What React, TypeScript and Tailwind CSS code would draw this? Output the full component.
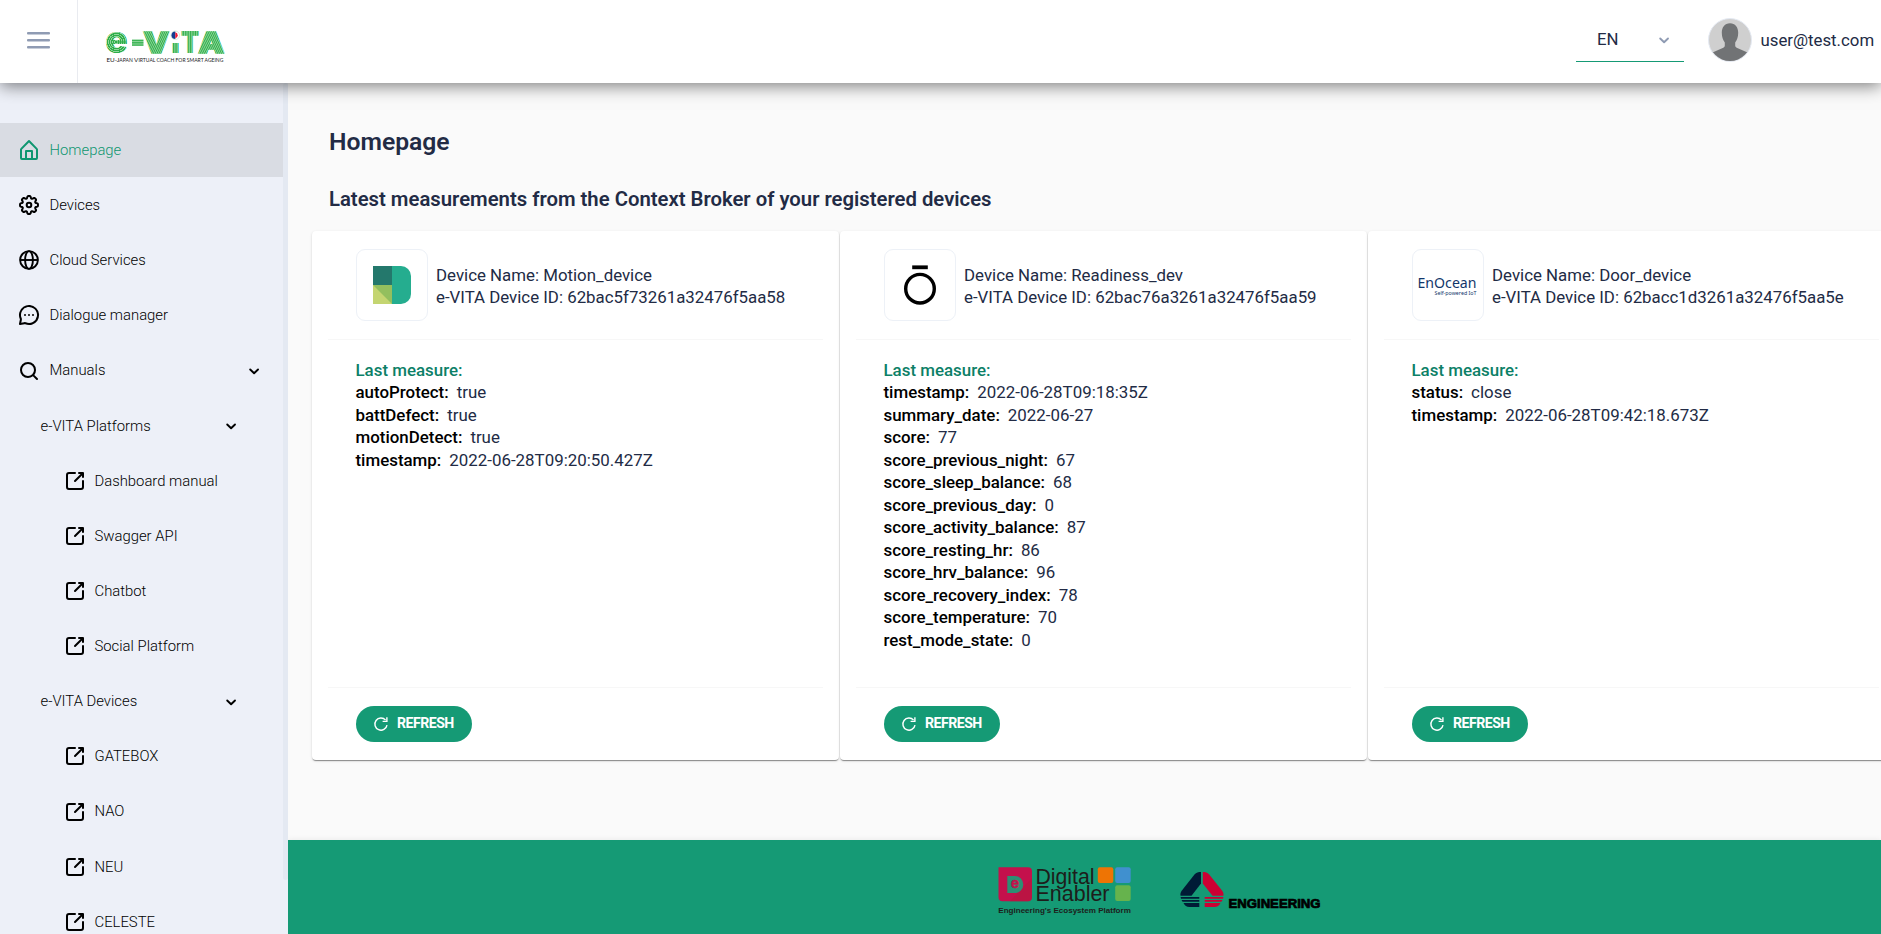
import React from "react";

type IconProps = { className?: string };

const Svg = ({ children, className = "" }: { children: React.ReactNode; className?: string }) => (
  <svg viewBox="0 0 24 24" className={`size-6 shrink-0 ${className}`} fill="currentColor">
    {children}
  </svg>
);

const HomeIcon = () => (
  <Svg>
    <path d="M20.42 10.18L12.71 2.3a1 1 0 0 0-1.42 0l-7.71 7.89A2 2 0 0 0 3 11.62V20a2 2 0 0 0 1.89 2h14.22A2 2 0 0 0 21 20v-8.38a2.07 2.07 0 0 0-.58-1.44zM10 20v-6h4v6zm9 0h-3v-7a1 1 0 0 0-1-1H9a1 1 0 0 0-1 1v7H5v-8.42l7-7.15 7 7.19z" />
  </Svg>
);

const gearPoints = Array.from({ length: 96 }, (_, i) => {
  const a = (i / 96) * Math.PI * 2;
  const r = 7.8 + 1.2 * Math.tanh(1.8 * (Math.cos(8 * a) + 0.3));
  return `${(12 + r * Math.sin(a)).toFixed(2)},${(12 - r * Math.cos(a)).toFixed(2)}`;
}).join(" ");

const GearIcon = () => (
  <Svg>
    <polygon points={gearPoints} fill="none" stroke="currentColor" strokeWidth="2" strokeLinejoin="round" />
    <circle cx="12" cy="12" r="2.3" fill="none" stroke="currentColor" strokeWidth="2" />
  </Svg>
);

const GlobeIcon = () => (
  <Svg>
    <g fill="none" stroke="currentColor" strokeWidth="1.9">
      <circle cx="12" cy="12" r="8.9" />
      <ellipse cx="12" cy="12" rx="3.9" ry="8.9" />
      <path d="M3 12h18" />
    </g>
  </Svg>
);

const ChatIcon = () => (
  <Svg>
    <circle cx="12" cy="12" r="1" />
    <circle cx="16" cy="12" r="1" />
    <circle cx="8" cy="12" r="1" />
    <path d="M19.07 4.93a10 10 0 0 0-16.28 11 1.06 1.06 0 0 1 .09.64L2 20.8a1 1 0 0 0 .27.91A1 1 0 0 0 3 22h.2l4.28-.86a1.26 1.26 0 0 1 .64.09 10 10 0 0 0 11-16.28zm.83 8.36a8 8 0 0 1-11 6.08 3.26 3.26 0 0 0-1.25-.26 3.43 3.43 0 0 0-.56.05l-2.82.57.57-2.82a3.09 3.09 0 0 0-.21-1.81 8 8 0 0 1 6.08-11 8 8 0 0 1 9.19 9.19z" />
  </Svg>
);

const SearchIcon = () => (
  <Svg>
    <path d="M20.71 19.29l-3.4-3.39A7.92 7.92 0 0 0 19 11a8 8 0 1 0-8 8 7.92 7.92 0 0 0 4.9-1.69l3.39 3.4a1 1 0 0 0 1.42 0 1 1 0 0 0 0-1.42zM5 11a6 6 0 1 1 6 6 6 6 0 0 1-6-6z" />
  </Svg>
);

const LinkIcon = () => (
  <Svg>
    <path d="M20 11a1 1 0 0 0-1 1v6a1 1 0 0 1-1 1H6a1 1 0 0 1-1-1V6a1 1 0 0 1 1-1h6a1 1 0 0 0 0-2H6a3 3 0 0 0-3 3v12a3 3 0 0 0 3 3h12a3 3 0 0 0 3-3v-6a1 1 0 0 0-1-1z" />
    <path d="M16 5h1.58l-6.29 6.28a1 1 0 0 0 0 1.42 1 1 0 0 0 1.42 0L19 6.42V8a1 1 0 0 0 1 1 1 1 0 0 0 1-1V4a1 1 0 0 0-1-1h-4a1 1 0 0 0 0 2z" />
  </Svg>
);

const Chevron = ({ className = "" }: IconProps) => (
  <svg
    viewBox="0 0 18 18"
    className={`size-[18px] shrink-0 ${className}`}
    fill="none"
    stroke="currentColor"
    strokeWidth="1.9"
    strokeLinecap="round"
    strokeLinejoin="round"
  >
    <path d="M5.200 7.500L9.100 11.300 13 7.500" />
  </svg>
);

const RefreshIcon = () => (
  <svg viewBox="0 0 16 16" className="size-4" fill="none" stroke="currentColor" strokeWidth="1.4">
    <path d="M14 9.1A6.1 6.1 0 1 1 12.6 4.1" />
    <path d="M13.9 1.2v4.2H9.6" />
  </svg>
);

const EVitaLogo = () => (
  <svg viewBox="0 0 120 34" className="h-[34px] w-[120px] overflow-visible" role="img" aria-label="e-VITA">
    <defs>
      <radialGradient id="rings" gradientUnits="userSpaceOnUse" cx="11.3" cy="12" r="2" spreadMethod="repeat">
        <stop offset="0" stopColor="#2fae4a" />
        <stop offset="0.55" stopColor="#2fae4a" />
        <stop offset="0.7" stopColor="#8fd69c" />
        <stop offset="1" stopColor="#8fd69c" />
      </radialGradient>
      <pattern id="stripe-v" width="1.7" height="4" patternUnits="userSpaceOnUse">
        <rect width="1.7" height="4" fill="#9ddba8" />
        <rect width="1" height="4" fill="#2fae4a" />
      </pattern>
      <pattern id="stripe-h" width="4" height="1.7" patternUnits="userSpaceOnUse">
        <rect width="4" height="1.7" fill="#9ddba8" />
        <rect width="4" height="1" fill="#2fae4a" />
      </pattern>
      <pattern id="stripe-l" width="1.9" height="4" patternUnits="userSpaceOnUse" patternTransform="rotate(-27)">
        <rect width="1.9" height="4" fill="#9ddba8" />
        <rect width="1.1" height="4" fill="#2fae4a" />
      </pattern>
      <pattern id="stripe-r" width="1.9" height="4" patternUnits="userSpaceOnUse" patternTransform="rotate(27)">
        <rect width="1.9" height="4" fill="#9ddba8" />
        <rect width="1.1" height="4" fill="#2fae4a" />
      </pattern>
    </defs>
    <g fontFamily="Inter, sans-serif" fontWeight="900">
      <text x="0.3" y="23" fontSize="38" textLength="22.6" lengthAdjust="spacingAndGlyphs" fill="url(#rings)">e</text>
      <rect x="27" y="9.5" width="11.5" height="6.4" fill="url(#stripe-h)" />
      <text x="38.5" y="22.6" fontSize="29" textLength="25.500" lengthAdjust="spacingAndGlyphs" fill="url(#stripe-l)" stroke="url(#stripe-l)" strokeWidth="1.6">V</text>
      <text x="66" y="23.300" fontSize="17.500" textLength="9" lengthAdjust="spacingAndGlyphs" fill="url(#stripe-v)">ı</text>
      <text x="75.800" y="23.300" fontSize="30.500" textLength="18.600" lengthAdjust="spacingAndGlyphs" fill="url(#stripe-v)">T</text>
      <text x="93.500" y="22.600" fontSize="29" textLength="25.500" lengthAdjust="spacingAndGlyphs" fill="url(#stripe-r)" stroke="url(#stripe-r)" strokeWidth="1.6">A</text>
    </g>
    <circle cx="70.300" cy="5.300" r="4.300" fill="#fff" stroke="#b7dfc4" strokeWidth="0.6" />
    <path d="M70.300 1.500a3.800 3.800 0 0 0 0 7.600z" fill="#123c8f" />
    <path d="M70.300 2.200a3.200 3.200 0 0 1 0 6.200z" fill="#f01830" />
    <text x="1.400" y="32.200" fontFamily="Lato, sans-serif" fontSize="6" textLength="117" lengthAdjust="spacingAndGlyphs" fill="#1c1c1c">
      EU-J<tspan fontSize="4.800">APAN</tspan> V<tspan fontSize="4.800">IRTUAL COACH FOR SMART AGEING</tspan>
    </text>
  </svg>
);

const DigitalEnablerLogo = () => (
  <svg viewBox="0 0 134 50" className="h-[50px] w-[134px] overflow-visible" role="img" aria-label="Digital Enabler">
    <path d="M0.500 1.200H30a4 4 0 0 1 4 4v26a4 4 0 0 1-4 4H4.500a4 4 0 0 1-4-4z" fill="#c4104c" />
    <path d="M34 12v19a4 4 0 0 1-4 4.200H12z" fill="#b5173d" opacity="0.6" />
    <path d="M9.300 10h7.500a8.500 8.500 0 0 1 0 17H9.300z" fill="#2d8f73" />
    <text x="16.900" y="22.300" fontFamily="Liberation Sans, sans-serif" fontWeight="700" fontSize="15" textAnchor="middle" fill="#c4104c" stroke="#c4104c" strokeWidth="0.4">e</text>
    <g fontFamily="Liberation Sans, sans-serif" fill="#1d1d1b">
      <text x="37.500" y="17.500" fontSize="21.500" textLength="59" lengthAdjust="spacingAndGlyphs">Digital</text>
      <text x="37.500" y="35.200" fontSize="21.500" textLength="74" lengthAdjust="spacingAndGlyphs">Enabler</text>
      <text x="0.300" y="47.100" fontSize="7.500" fontWeight="700" textLength="132.500" lengthAdjust="spacingAndGlyphs">Engineering's Ecosystem Platform</text>
    </g>
    <rect x="99.800" y="1.200" width="15.500" height="15.800" rx="2" fill="#ee7404" />
    <rect x="117.200" y="1.200" width="15.500" height="15.800" rx="2" fill="#4090cf" />
    <rect x="117.200" y="19.200" width="15.500" height="15.800" rx="2" fill="#66b34d" />
  </svg>
);

const EngineeringLogo = () => (
  <svg viewBox="0 0 142 38" className="h-[38px] w-[142px] overflow-visible" role="img" aria-label="Engineering">
    <path d="M21 1v11.500L11.500 24.800H0.500c-.3-1.800 0-3.300 1-4.800L14.500 3.500C16.200 1.500 18.500 1 21 1z" fill="#001b36" />
    <path d="M22.800 1c2.500 0 4.700.5 6.400 2.500L42.400 20c1 1.500 1.300 3 1 4.800H32.500L22.800 12.500z" fill="#cc0033" />
    <path d="M0.600 26h18.700v1.800H1zM1.500 29h17.800v1.800H2.600zM3.500 32h15.800v4H9.500C6.500 36 4.800 34.500 3.500 32z" fill="#001b36" />
    <path d="M43.400 26H24.700v1.800H43zM42.500 29H24.700v1.800h16.700zM40.500 32H24.700v4h9.800c3 0 4.700-1.500 6-4z" fill="#cc0033" />
    <text x="48.500" y="37" fontFamily="Liberation Sans, sans-serif" fontWeight="700" fontSize="12.500" textLength="92" lengthAdjust="spacingAndGlyphs" fill="#000" stroke="#000" strokeWidth="0.700">
      ENGINEERING
    </text>
  </svg>
);

const Avatar = () => (
  <svg viewBox="0 0 44 44" className="size-11">
    <clipPath id="avatar-clip">
      <circle cx="22" cy="22" r="21" />
    </clipPath>
    <circle cx="22" cy="22" r="21.500" fill="#cfcfcf" stroke="#e4e9f2" />
    <g clipPath="url(#avatar-clip)" fill="#717375">
      <path d="M22 5.300c5.200 0 8.200 4 8.200 9.500 0 4-1.200 7.500-3 9.800v3c0 1 .5 1.800 1.500 2.200l10.800 4.700V46H4.500V34.500l10.800-4.700c1-.4 1.500-1.200 1.500-2.200v-3c-1.800-2.300-3-5.800-3-9.800 0-5.500 3-9.500 8.200-9.500z" />
    </g>
  </svg>
);

const topItems = [
  { label: "Homepage", icon: <HomeIcon />, active: true },
  { label: "Devices", icon: <GearIcon /> },
  { label: "Cloud Services", icon: <GlobeIcon /> },
  { label: "Dialogue manager", icon: <ChatIcon /> },
  { label: "Manuals", icon: <SearchIcon />, open: true },
];

const groups = [
  { label: "e-VITA Platforms", links: ["Dashboard manual", "Swagger API", "Chatbot", "Social Platform"] },
  { label: "e-VITA Devices", links: ["GATEBOX", "NAO", "NEU", "CELESTE"] },
];

const Sidebar = () => (
  <aside className="flex w-72 shrink-0 overflow-hidden bg-[#edf0f8] text-[14.850px] font-light text-black">
    <nav className="w-[283px] pt-10">
      {topItems.map((item) => (
        <div
          key={item.label}
          className={`mb-px flex h-[54.140px] items-center pl-[17.250px] pr-[20px] ${item.active ? "bg-[#d9dce3] text-[#0f9670]" : ""}`}
        >
          {item.icon}
          <span className="ml-[8.250px] grow">{item.label}</span>
          {item.open && <Chevron className="mt-px" />}
        </div>
      ))}
      {groups.map((group) => (
        <React.Fragment key={group.label}>
          <div className="mb-px flex h-[54.140px] items-center pl-[40.500px] pr-[43px]">
            <span className="grow">{group.label}</span>
            <Chevron className="mt-px" />
          </div>
          {group.links.map((link) => (
            <div key={link} className="mb-px flex h-[54.140px] items-center pl-[62.500px]">
              <LinkIcon />
              <span className="ml-2">{link}</span>
            </div>
          ))}
        </React.Fragment>
      ))}
    </nav>
    <div className="h-[797px] w-[5px] rounded-[3px] bg-[#e4e9f2]" />
  </aside>
);

const MotionLogo = () => (
  <svg viewBox="0 0 38 38" className="size-[38px]">
    <path d="M0 0h19v19H0z" fill="#24786c" />
    <path d="M19 0h9a10 10 0 0 1 10 10v18a10 10 0 0 1-10 10h-9z" fill="#25ad8f" />
    <path d="M0 19h19v19H0z" fill="#c4d571" />
    <path d="M0 19h19v19z" fill="#93bf5e" />
  </svg>
);

const OuraLogo = () => (
  <svg viewBox="0 0 32 40" className="h-10 w-8" fill="none" stroke="#000">
    <path d="M8.200 2.300h15.600" strokeWidth="3.800" />
    <circle cx="16" cy="23.700" r="14.300" strokeWidth="3.400" />
  </svg>
);

const EnOceanLogo = () => (
  <svg viewBox="0 0 60 24" className="h-6 w-[60px] overflow-visible" fontFamily="Noto Sans, sans-serif" fill="#12366b">
    <text x="-0.500" y="15" fontSize="14.500" textLength="59" lengthAdjust="spacingAndGlyphs">EnOcean</text>
    <text x="16.500" y="22" fontSize="5.200" textLength="42" lengthAdjust="spacingAndGlyphs">Self-powered IoT</text>
  </svg>
);

const devices = [
  {
    name: "Motion_device",
    id: "62bac5f73261a32476f5aa58",
    logo: <MotionLogo />,
    measures: [
      ["autoProtect", "true"],
      ["battDefect", "true"],
      ["motionDetect", "true"],
      ["timestamp", "2022-06-28T09:20:50.427Z"],
    ],
  },
  {
    name: "Readiness_dev",
    id: "62bac76a3261a32476f5aa59",
    logo: <OuraLogo />,
    measures: [
      ["timestamp", "2022-06-28T09:18:35Z"],
      ["summary_date", "2022-06-27"],
      ["score", "77"],
      ["score_previous_night", "67"],
      ["score_sleep_balance", "68"],
      ["score_previous_day", "0"],
      ["score_activity_balance", "87"],
      ["score_resting_hr", "86"],
      ["score_hrv_balance", "96"],
      ["score_recovery_index", "78"],
      ["score_temperature", "70"],
      ["rest_mode_state", "0"],
    ],
  },
  {
    name: "Door_device",
    id: "62bacc1d3261a32476f5aa5e",
    logo: <EnOceanLogo />,
    measures: [
      ["status", "close"],
      ["timestamp", "2022-06-28T09:42:18.673Z"],
    ],
  },
];

const DeviceCard = ({ device }: { device: (typeof devices)[number] }) => (
  <article className="flex h-[529px] w-[527px] shrink-0 flex-col rounded bg-white px-4 shadow-[0_2px_1px_-1px_rgba(0,0,0,0.3),0_1px_1px_0_rgba(0,0,0,0.14),0_1px_3px_0_rgba(0,0,0,0.12)]">
    <header className="flex h-[109px] items-center gap-2 border-b border-[#f7f7f7] pl-7">
      <div className="flex size-[72px] shrink-0 items-center justify-center rounded-[9px] border border-[#edf1f7]">{device.logo}</div>
      <div className="whitespace-nowrap pt-px text-[16.850px] leading-[22px] text-[#222b45]">
        <p>Device Name: {device.name}</p>
        <p>e-VITA Device ID: {device.id}</p>
      </div>
    </header>
    <div className="grow border-b border-[#f7f7f7] pl-[27.500px] pt-[18.500px] text-[16.900px] leading-[22.500px] text-[#222b45]">
      <p className="font-medium text-[#0c8067]">Last measure:</p>
      {device.measures.map(([key, value]) => (
        <p key={key}>
          <span className="mr-2 font-medium text-black">{key}:</span>
          <span>{value}</span>
        </p>
      ))}
    </div>
    <footer className="flex h-[72px] items-center pl-7">
      <button className="flex h-9 w-[116px] items-center gap-2 rounded-full bg-[#159a75] pl-[17px] text-[14.100px] font-bold tracking-[-0.5px] text-white">
        <RefreshIcon />
        REFRESH
      </button>
    </footer>
  </article>
);

const Header = () => (
  <header className="relative z-10 flex h-[83px] shrink-0 items-center bg-white text-[#222b45] shadow-[0_3px_16px_rgba(0,0,0,0.5)]">
    <div className="flex h-full w-[78px] items-center border-r border-[#e9ebf0] pl-[27px]">
      <svg viewBox="0 0 23 17" className="mb-[3px] h-[17px] w-[23px]" fill="#8f9bb3">
        <rect width="23" height="2.600" rx="1" />
        <rect y="7" width="23" height="2.600" rx="1" />
        <rect y="14" width="23" height="2.600" rx="1" />
      </svg>
    </div>
    <div className="ml-[27px] mt-[11px]">
      <EVitaLogo />
    </div>
    <div className="ml-auto mr-[23.500px] mt-[-4px] flex h-11 w-[108px] items-center justify-between border-b border-[#159a75] pl-[21px] pr-[11px] text-[16.800px]">
      <span className="pt-0.5">EN</span>
      <Chevron className="mt-0.5 text-[#8f9bb3]" />
    </div>
    <div className="mb-[3px] flex w-[173.500px] items-center gap-[9px] text-[16.800px]">
      <Avatar />
      <span className="pt-px">user@test.com</span>
    </div>
  </header>
);

export default function App() {
  return (
    <div className="flex h-[934px] w-[1881px] flex-col overflow-hidden bg-[#fafafa] font-['Roboto',sans-serif] text-base">
      <Header />
      <div className="flex min-h-0 grow">
        <Sidebar />
        <div className="flex min-w-0 grow flex-col overflow-hidden">
          <main className="grow pl-6">
            <h1 className="ml-[17px] mt-[43px] text-[24.700px] font-semibold leading-8 text-[#222b45]">Homepage</h1>
            <h2 className="ml-[17px] mt-[29px] text-[20.300px] font-semibold leading-6 text-[#222b45]">
              Latest measurements from the Context Broker of your registered devices
            </h2>
            <section className="mt-5 flex gap-px">
              {devices.map((device) => (
                <DeviceCard key={device.id} device={device} />
              ))}
            </section>
          </main>
          <footer className="flex h-[94px] shrink-0 items-start justify-center gap-12 bg-[#159a75] pl-[150px] pt-[26px] shadow-[0_0_6px_rgba(0,0,0,0.08)]">
            <DigitalEnablerLogo />
            <div className="pt-[5px]">
              <EngineeringLogo />
            </div>
          </footer>
        </div>
      </div>
    </div>
  );
}
